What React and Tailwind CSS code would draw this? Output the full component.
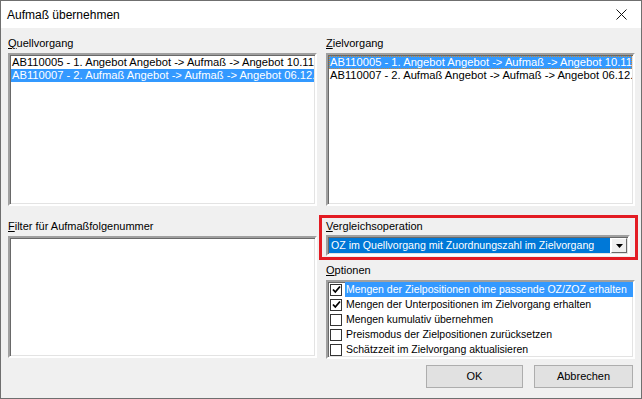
import React from "react";

const sunken =
  "bg-white border-2 border-t-[#a0a0a0] border-l-[#a0a0a0] border-r-white border-b-white shadow-[inset_1px_1px_0_#696969,inset_-1px_-1px_0_#e3e3e3]";

function Label({ accessKey, rest, className = "" }) {
  return (
    <div className={`h-[14px] leading-[14px] whitespace-nowrap ${className}`}>
      <span className="underline underline-offset-[1px]">{accessKey}</span>
      {rest}
    </div>
  );
}

function ListRow({ text, selected, focused }) {
  return (
    <div
      className={`h-[13px] leading-[13px] pl-[1px] text-[11.2px] whitespace-nowrap overflow-hidden ${
        selected ? "bg-[#3399ff] text-white" : "text-black"
      } ${focused ? "outline outline-1 outline-dotted outline-[#d0882c] -outline-offset-1" : ""}`}
    >
      {text}
    </div>
  );
}

function CheckRow({ label, checked, selected }) {
  return (
    <div className="h-[15px] flex items-center">
      <div className="w-[12px] h-[12px] ml-[2px] mr-[3px] bg-white border border-[#333] flex items-center justify-center shrink-0">
        {checked && (
          <svg width="9" height="9" viewBox="0 0 9 9">
            <path d="M1 4.5 L3.3 7 L8 1.5" fill="none" stroke="#000" strokeWidth="1.8" />
          </svg>
        )}
      </div>
      <div
        className={`h-[15px] leading-[15px] pl-[1px] pr-[2px] text-[10.5px] whitespace-nowrap ${
          selected ? "bg-[#3399ff] text-white flex-1" : "text-black"
        }`}
      >
        {label}
      </div>
    </div>
  );
}

export default function App() {
  const rows = [
    "AB110005 - 1. Angebot Angebot -> Aufmaß -> Angebot 10.11",
    "AB110007 - 2. Aufmaß Angebot -> Aufmaß -> Angebot 06.12.",
  ];

  return (
    <div className="w-[642px] h-[399px] flex flex-col bg-[#f0f0f0] border border-[#6f6f6f] text-[11px] text-black font-['Liberation_Sans',Arial,sans-serif]">
      {/* title bar */}
      <div className="h-[27px] bg-white flex items-center justify-between pl-[6px] pr-[14px] shrink-0">
        <span className="text-[12px]">Aufmaß übernehmen</span>
        <svg width="11" height="11" viewBox="0 0 11 11">
          <path d="M0.5 0.5 L10.5 10.5 M10.5 0.5 L0.5 10.5" stroke="#111" strokeWidth="1" />
        </svg>
      </div>

      <div className="flex-1 flex flex-col pl-[7px] pt-[8px]">
        <div className="flex gap-[9px]">
          {/* left column */}
          <div className="w-[309px] flex flex-col">
            <Label accessKey="Q" rest="uellvorgang" />
            <div className={`${sunken} mt-[3px] h-[153px] p-[1px] overflow-hidden`}>
              <ListRow text={rows[0]} />
              <ListRow text={rows[1]} selected />
            </div>
            <Label accessKey="F" rest="ilter für Aufmaßfolgenummer" className="mt-[13px]" />
            <div className={`${sunken} mt-[3px] h-[122px]`} />
          </div>

          {/* right column */}
          <div className="w-[309px] flex flex-col">
            <Label accessKey="Z" rest="ielvorgang" />
            <div className={`${sunken} mt-[3px] h-[153px] p-[1px] overflow-hidden`}>
              <ListRow text={rows[0]} selected focused />
              <ListRow text={rows[1]} />
            </div>

            <div className="relative mt-[13px] mr-[5px]">
              <Label accessKey="V" rest="ergleichsoperation" />
              <div className={`${sunken} mt-[2px] h-[21px] flex items-center p-[1px]`}>
                <div className="flex-1 h-full bg-[#0078d7] text-white text-[10.6px] leading-[15px] pl-[2px] whitespace-nowrap overflow-hidden">
                  OZ im Quellvorgang mit Zuordnungszahl im Zielvorgang
                </div>
                <div className="w-[16px] h-full ml-[1px] bg-[#f0f0f0] border border-t-white border-l-white border-r-[#696969] border-b-[#696969] flex items-center justify-center">
                  <svg width="7" height="4" viewBox="0 0 7 4">
                    <path d="M0 0 H7 L3.5 4 Z" fill="#000" />
                  </svg>
                </div>
              </div>
              {/* highlight annotation */}
              <div className="absolute -left-[7px] -top-[4px] -right-[8px] -bottom-[4px] border-[3px] border-[#e31b23] pointer-events-none" />
            </div>

            <Label accessKey="O" rest="ptionen" className="mt-[7px]" />
            <div className={`${sunken} mt-[3px] h-[79px] overflow-hidden`}>
              <CheckRow label="Mengen der Zielpositionen ohne passende OZ/ZOZ erhalten" checked selected />
              <CheckRow label="Mengen der Unterpositionen im Zielvorgang erhalten" checked />
              <CheckRow label="Mengen kumulativ übernehmen" />
              <CheckRow label="Preismodus der Zielpositionen zurücksetzen" />
              <CheckRow label="Schätzzeit im Zielvorgang aktualisieren" />
            </div>
          </div>
        </div>

        {/* buttons */}
        <div className="flex justify-end gap-[11px] pr-[8px] mt-[6px]">
          <button className="w-[97px] h-[23px] bg-[#e1e1e1] border border-[#adadad] text-[11px]">
            OK
          </button>
          <button className="w-[99px] h-[23px] bg-[#e1e1e1] border border-[#adadad] text-[11px]">
            Abbrechen
          </button>
        </div>
      </div>
    </div>
  );
}
